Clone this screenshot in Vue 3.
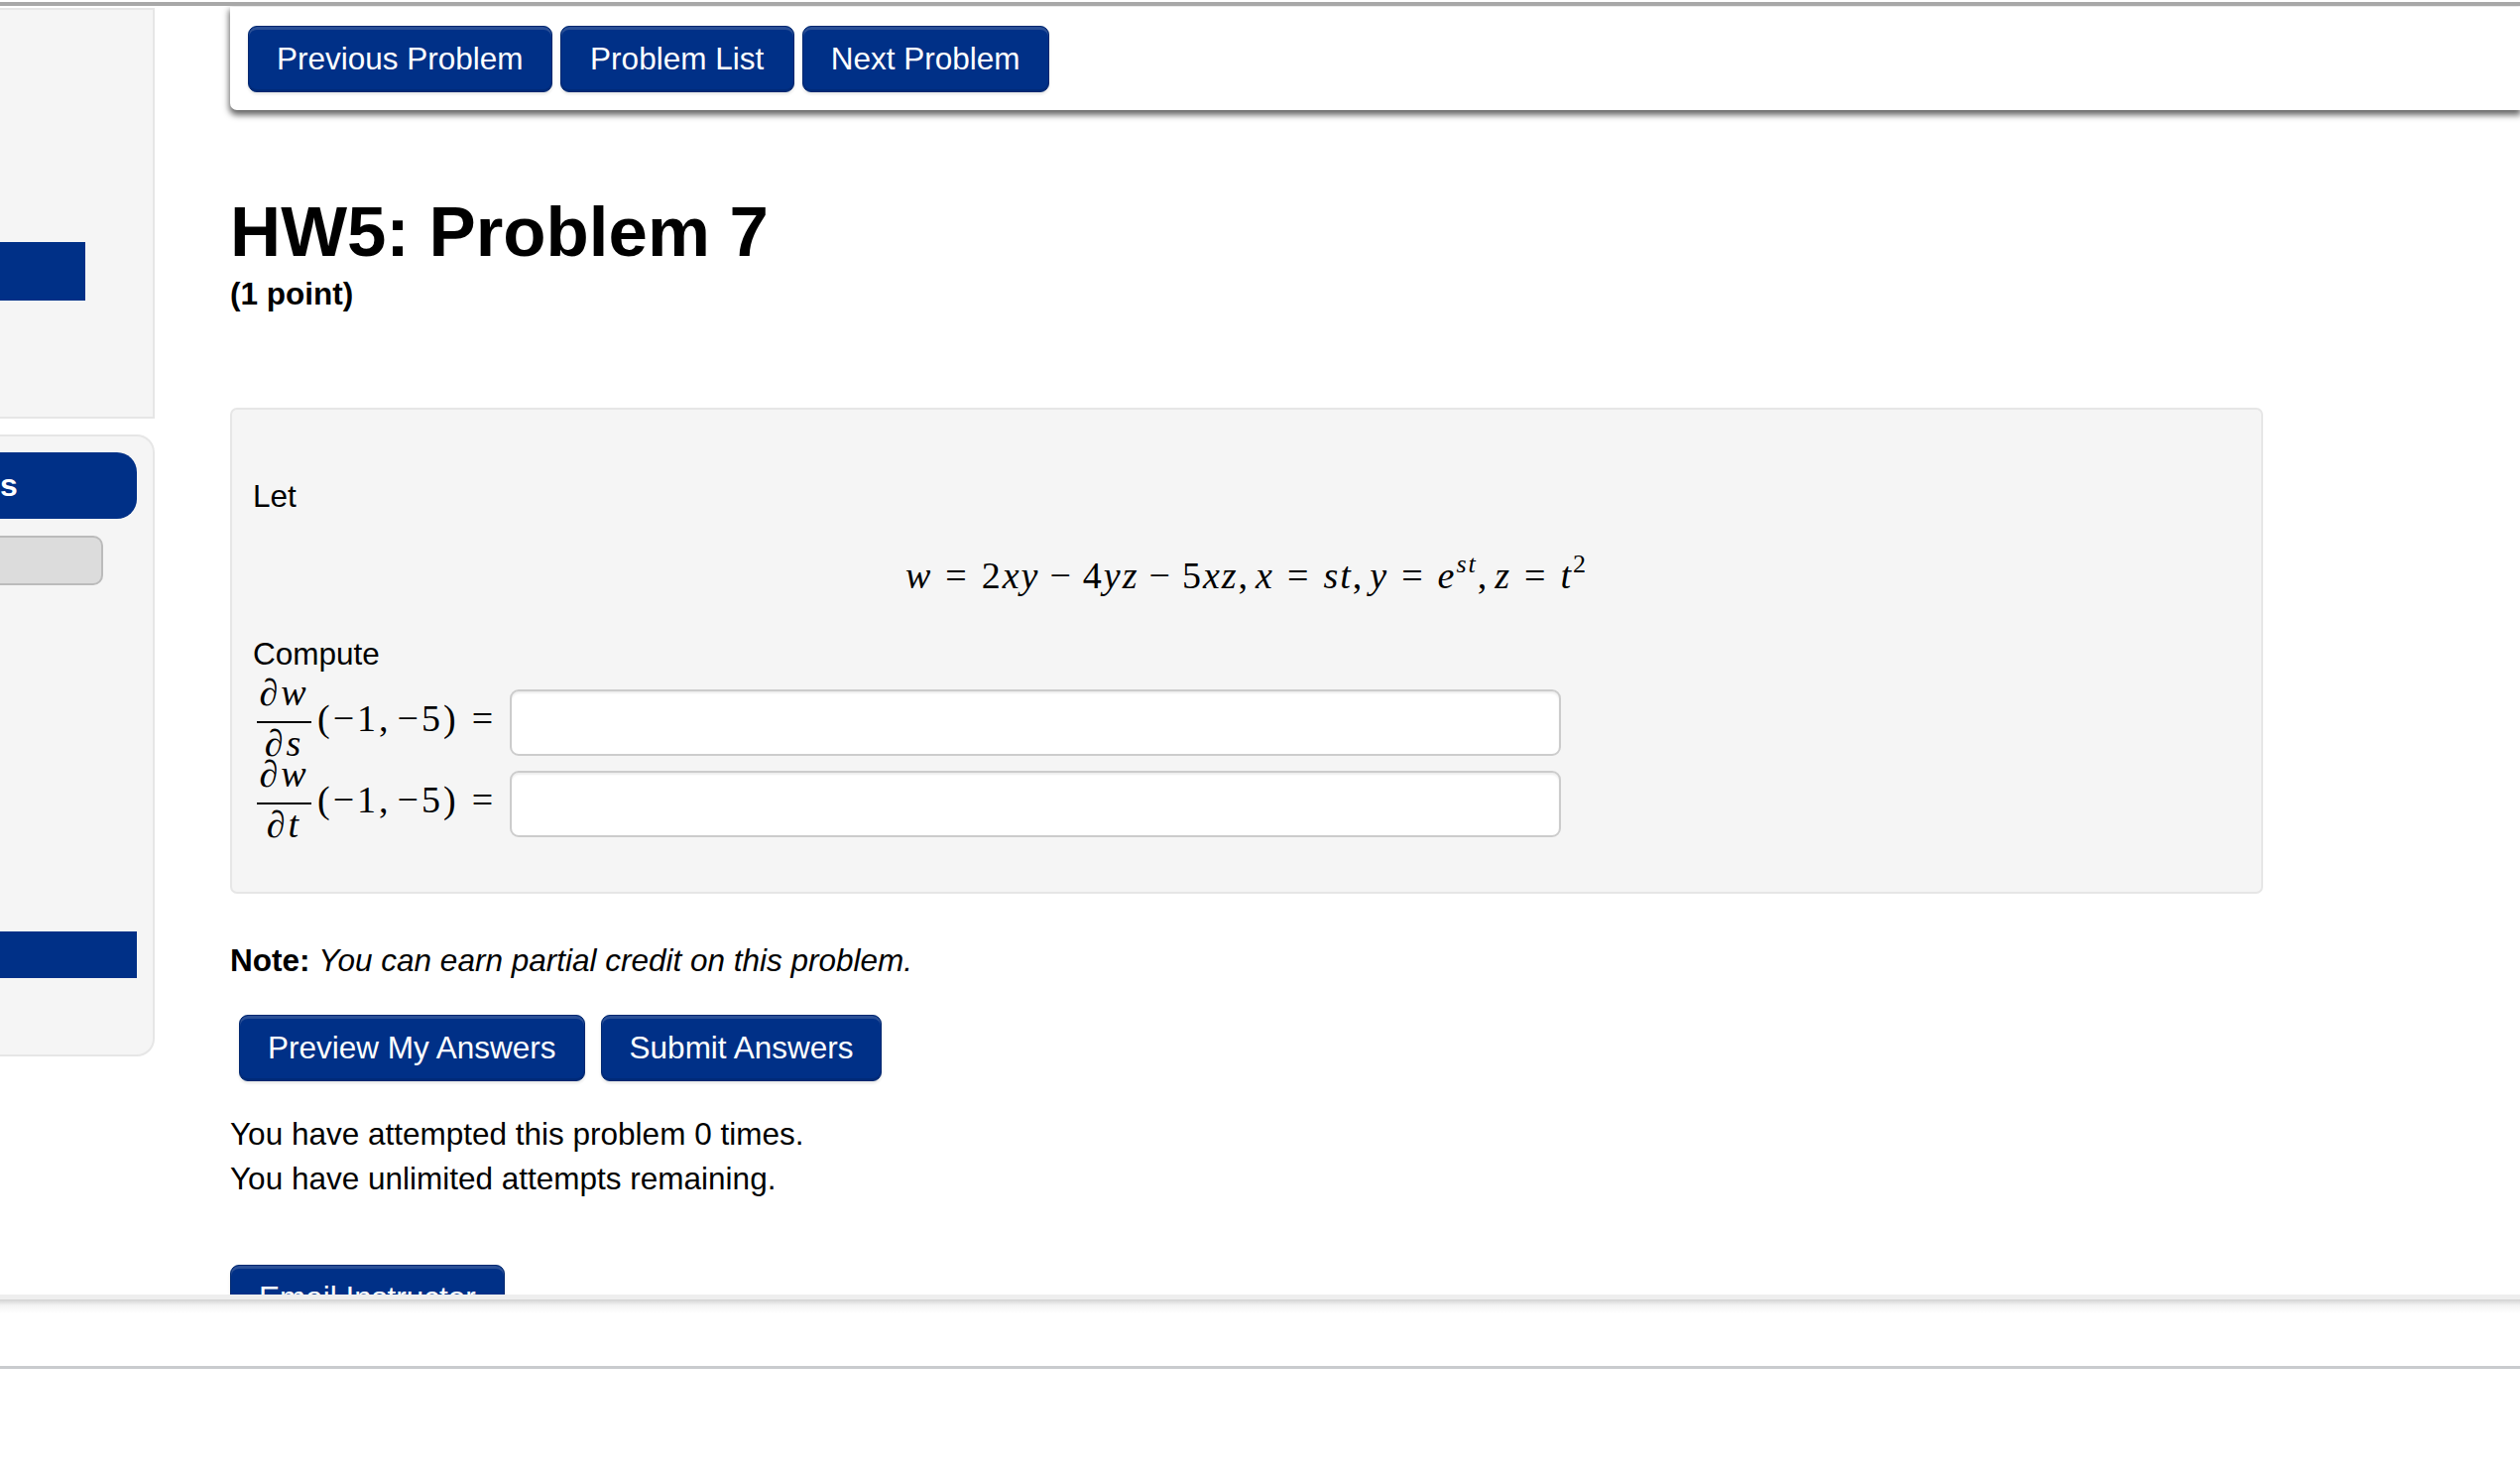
<script setup>
const nav = ['Previous Problem', 'Problem List', 'Next Problem']
const rows = [
  { den: 's' },
  { den: 't' }
]
</script>

<template>
  <div class="page">
    <div class="topbar"></div>
    <div class="body">
      <aside class="sidebar">
        <div class="well well-top">
          <div class="block"></div>
        </div>
        <div class="well well-bottom">
          <div class="pill">s</div>
          <div class="grey"></div>
          <div class="bar"></div>
        </div>
      </aside>
      <main class="main">
        <div class="toolbar">
          <button v-for="n in nav" :key="n" class="btn">{{ n }}</button>
        </div>
        <h1 class="title">HW5: Problem 7</h1>
        <div class="points">(1 point)</div>
        <section class="problem">
          <div class="line">Let</div>
          <div class="display">
            <span class="math">
              <i>w</i><span class="rel">=</span>2<i>xy</i><span class="bin">−</span>4<i>yz</i><span class="bin">−</span>5<i>xz</i><span class="punct">,</span><i>x</i><span class="rel">=</span><i>st</i><span class="punct">,</span><i>y</i><span class="rel">=</span><i>e</i><sup><i>st</i></sup><span class="punct">,</span><i>z</i><span class="rel">=</span><i>t</i><sup>2</sup>
            </span>
          </div>
          <div class="line">Compute</div>
          <div class="rows">
            <div v-for="r in rows" :key="r.den" class="row">
              <span class="math lhs">
                <span class="frac">
                  <span class="num"><i>∂w</i></span>
                  <span class="rule"></span>
                  <span class="den"><i>∂{{ r.den }}</i></span>
                </span>
                <span class="args">(−1<span class="punct">,</span>−5)<span class="rel eq">=</span></span>
              </span>
              <input class="answer" type="text" />
            </div>
          </div>
        </section>
        <p class="note"><b>Note:</b> <em>You can earn partial credit on this problem.</em></p>
        <div class="actions">
          <button class="btn">Preview My Answers</button>
          <button class="btn">Submit Answers</button>
        </div>
        <div class="attempts">
          <div>You have attempted this problem 0 times.</div>
          <div>You have unlimited attempts remaining.</div>
        </div>
        <button class="btn email">Email Instructor</button>
      </main>
    </div>
    <footer class="footer"></footer>
  </div>
</template>

<style scoped>
.page {
  width: 2541px;
  height: 1493px;
  overflow: hidden;
  background: #fff;
  color: #000;
  font-family: "Liberation Sans", Arial, sans-serif;
  font-size: 31.5px;
  line-height: 45px;
  padding-top: 2px;
  box-sizing: border-box;
}
.topbar {
  height: 4px;
  background: #a8a8a8;
}
.body {
  display: flex;
  height: 1299px;
  overflow: hidden;
}
.sidebar {
  width: 156px;
  flex: none;
  padding-top: 2px;
  box-sizing: border-box;
}
.well {
  box-sizing: border-box;
  background: #f5f5f5;
  border: 2px solid #e6e6e6;
  border-left: 0;
}
.well-top {
  height: 414px;
  padding-top: 234px;
}
.block {
  width: 86px;
  height: 59px;
  background: #003087;
}
.well-bottom {
  height: 627px;
  margin-top: 16px;
  border-radius: 0 18px 18px 0;
  padding-top: 16px;
  padding-right: 16px;
}
.pill {
  width: 138px;
  height: 67px;
  border-radius: 0 20px 20px 0;
  background: #003087;
  color: #fff;
  font-weight: 700;
  font-size: 32px;
  line-height: 67px;
}
.grey {
  width: 104px;
  height: 50px;
  margin-top: 17px;
  box-sizing: border-box;
  background: #dcdcdc;
  border: 2px solid #bbb;
  border-left: 0;
  border-radius: 0 10px 10px 0;
}
.bar {
  width: 138px;
  height: 47px;
  margin-top: 349px;
  background: #003087;
}
.main {
  flex: 1;
  margin-left: 76px;
  min-width: 0;
}
.toolbar {
  margin-top: 1px;
  height: 104px;
  box-sizing: border-box;
  padding: 19px 0 0 18px;
  display: flex;
  gap: 8px;
  background: #fff;
  border-bottom-left-radius: 7px;
  box-shadow: 0 4px 6px 1px #666;
}
.btn {
  height: 67px;
  box-sizing: border-box;
  padding: 0 28px;
  font: inherit;
  font-size: 31.5px;
  line-height: 61px;
  color: #fff;
  background: #003087;
  border: 1px solid #00276f;
  border-radius: 9px;
  box-shadow: inset 0 3px 0 #2a4f96, inset 0 -2px 0 #002a78, 0 2px 3px rgba(0, 0, 0, 0.1);
  white-space: nowrap;
  flex: none;
}
.toolbar .btn:nth-child(2) {
  padding: 0 29.5px;
}
.title {
  margin: 83px 0 0;
  font-size: 70.8px;
  line-height: 80px;
  font-weight: 700;
}
.points {
  font-weight: 700;
  margin-bottom: -1px;
}
.problem {
  margin-top: 93px;
  width: 2050px;
  height: 490px;
  box-sizing: border-box;
  padding: 65px 0 0 21px;
  background: #f5f5f5;
  border: 2px solid #e6e6e6;
  border-radius: 7px;
}
.line {
  height: 45px;
}
.display {
  height: 114px;
  margin-left: -21px;
  display: flex;
  justify-content: center;
  align-items: center;
}
.math {
  font-family: "Liberation Serif", "DejaVu Serif", serif;
  font-size: 38px;
  letter-spacing: 2px;
  white-space: nowrap;
}
.math i {
  font-style: italic;
}
.math sup {
  font-size: 26px;
  line-height: 0;
  vertical-align: 16px;
}
.rel {
  margin: 0 13px;
}
.bin {
  margin: 0 10px;
}
.punct {
  margin-right: 6px;
}
.rows {
  margin-top: 5px;
}
.row {
  height: 82px;
  display: flex;
  align-items: center;
}
.lhs {
  width: 259px;
  flex: none;
  display: flex;
  align-items: center;
  line-height: 36px;
}
.frac {
  display: inline-flex;
  flex-direction: column;
  align-items: center;
  width: 55px;
  margin-left: 4px;
  letter-spacing: 3px;
}
.num {
  padding-bottom: 11px;
}
.den {
  padding: 2px 0 9px;
}
.rule {
  width: 100%;
  height: 2px;
  background: #000;
}
.args {
  margin-left: 6px;
  margin-bottom: 8px;
  letter-spacing: 3px;
}
.eq {
  margin-right: 0;
}
.answer {
  width: 1060px;
  height: 67px;
  box-sizing: border-box;
  background: #fff;
  border: 2px solid #ccc;
  border-radius: 9px;
  box-shadow: inset 0 2px 2px rgba(0, 0, 0, 0.07);
  outline: none;
}
.note {
  margin: 45px 0 0;
}
.actions {
  margin: 32px 0 0 9px;
  display: flex;
  gap: 16px;
}
.attempts {
  margin-top: 31px;
}
.email {
  margin-top: 64px;
  display: block;
}
.footer {
  height: 75px;
  box-sizing: border-box;
  border-top: 5px solid #eee;
  border-bottom: 3px solid #c9cbce;
  background: linear-gradient(#d2d2d2 0, #f4f4f4 6px, #fff 14px);
}
</style>
